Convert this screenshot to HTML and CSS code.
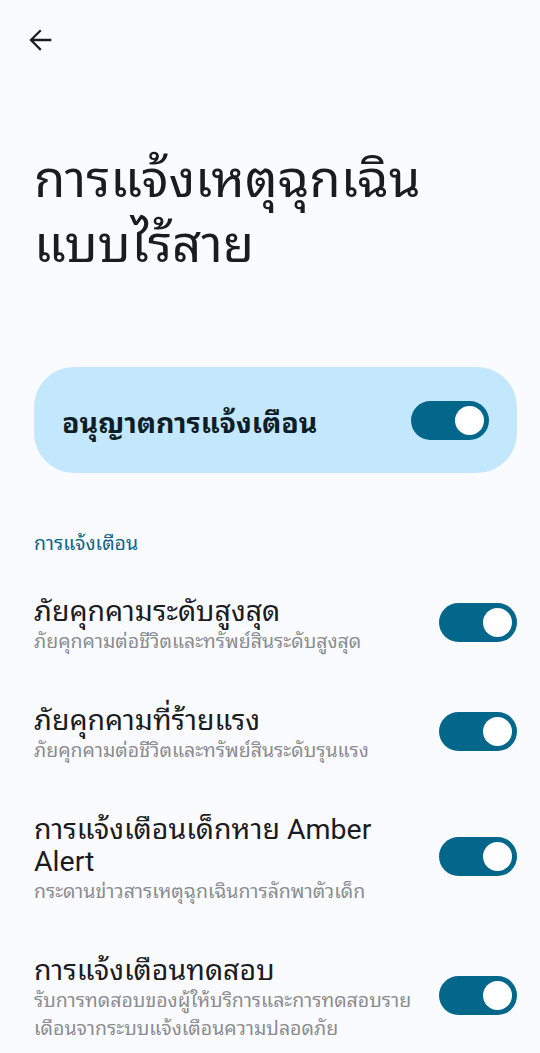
FILE: index.html
```html
<!DOCTYPE html>
<html lang="th">
<head>
<meta charset="utf-8">
<link rel="stylesheet" href="styles.css">
</head>
<body>
<div class="page">
  <div class="topbar">
    <svg class="back" viewBox="0 0 24 24" width="34" height="34"><path d="M20 11.1H7.6l5.5-5.5L12 4.5 4.5 12l7.5 7.5 1.1-1.1-5.5-5.5H20v-1.8z" fill="#1b1c1e"/></svg>
  </div>
  <h1 class="title">การแจ้งเหตุฉุกเฉิน<br>แบบไร้สาย</h1>
  <div class="master">
    <span class="master-label">อนุญาตการแจ้งเตือน</span>
    <span class="switch"><span class="thumb"></span></span>
  </div>
  <div class="section">การแจ้งเตือน</div>
  <div class="item">
    <div class="text">
      <div class="item-title">ภัยคุกคามระดับสูงสุด</div>
      <div class="item-sub">ภัยคุกคามต่อชีวิตและทรัพย์สินระดับสูงสุด</div>
    </div>
    <span class="switch"><span class="thumb"></span></span>
  </div>
  <div class="item">
    <div class="text">
      <div class="item-title">ภัยคุกคามที่ร้ายแรง</div>
      <div class="item-sub">ภัยคุกคามต่อชีวิตและทรัพย์สินระดับรุนแรง</div>
    </div>
    <span class="switch"><span class="thumb"></span></span>
  </div>
  <div class="item">
    <div class="text">
      <div class="item-title">การแจ้งเตือนเด็กหาย Amber<br>Alert</div>
      <div class="item-sub">กระดานข่าวสารเหตุฉุกเฉินการลักพาตัวเด็ก</div>
    </div>
    <span class="switch"><span class="thumb"></span></span>
  </div>
  <div class="item">
    <div class="text">
      <div class="item-title">การแจ้งเตือนทดสอบ</div>
      <div class="item-sub">รับการทดสอบของผู้ให้บริการและการทดสอบราย<br>เดือนจากระบบแจ้งเตือนความปลอดภัย</div>
    </div>
    <span class="switch"><span class="thumb"></span></span>
  </div>
</div>
</body>
</html>
```
FILE: styles.css
```css
html, body {
  margin: 0;
  padding: 0;
  background: #fafbfe;
}
body {
  font-family: "Roboto", "Noto Sans Thai Looped", "Noto Sans Thai", sans-serif;
  color: #1b1c1f;
  width: 540px;
  height: 1053px;
  overflow: hidden;
}
.page {
  padding: 0 23px 0 34px;
}
.topbar {
  height: 80px;
  padding-top: 23px;
  margin-left: -11px;
  box-sizing: border-box;
}
.back {
  display: block;
}
.title {
  margin: 67px 0 0 0;
  font-weight: 400;
  font-size: 51px;
  line-height: 65px;
  color: #1b1c1f;
}
.master {
  margin-top: 90px;
  height: 106px;
  border-radius: 40px;
  background: #c3e8fd;
  display: flex;
  align-items: center;
  justify-content: space-between;
  padding: 0 28px;
}
.master-label {
  font-size: 28.5px;
  font-weight: 700;
  color: #0f1d27;
}
.switch {
  width: 78px;
  height: 39px;
  border-radius: 20px;
  background: #03678b;
  flex: none;
  display: flex;
  align-items: center;
  justify-content: flex-end;
  padding-right: 5px;
  box-sizing: border-box;
}
.thumb {
  width: 29px;
  height: 29px;
  border-radius: 50%;
  background: #ffffff;
}
.section {
  margin-top: 58px;
  font-size: 19.5px;
  color: #0b6686;
  line-height: 26px;
}
.section + .item {
  margin-top: 11px;
}
.item {
  display: flex;
  align-items: center;
  justify-content: space-between;
  padding: 20px 0 21px;
}
.text {
  flex: 1;
  margin-right: 12px;
  padding-top: 8px;
}
.item-title {
  font-size: 28.5px;
  line-height: 32px;
  color: #1b1c1f;
}
.item-sub {
  font-size: 19.5px;
  line-height: 28px;
  color: #8a8d91;
}
```
